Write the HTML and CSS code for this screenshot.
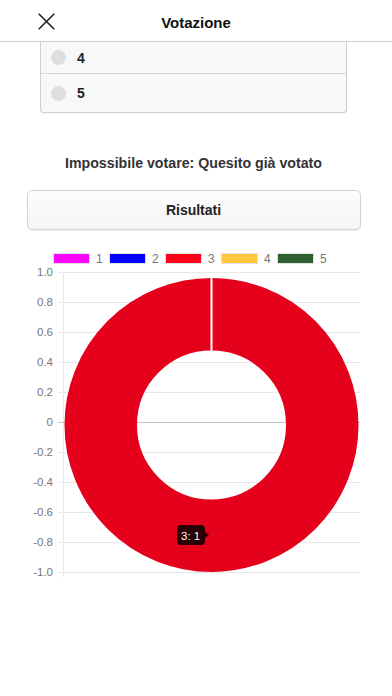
FILE: index.html
```html
<!DOCTYPE html>
<html>
	<head>
		<title>Votazione</title>
		<meta http-equiv="Content-Type" content="text/html; charset=UTF-8">
		<meta name="viewport" content="width=device-width, initial-scale=1">
		<link rel="stylesheet" href="styles.css">
	</head>

	<body>
		<div class="topbar">
			<button class="close" title="Chiudi">
				<svg width="17" height="17" viewBox="0 0 17 17">
					<path d="M1.2 1.2 L15.8 15.8 M15.8 1.2 L1.2 15.8" stroke="#222" stroke-width="1.6" fill="none" stroke-linecap="round"/>
				</svg>
			</button>
			<h1 class="title">Votazione</h1>
		</div>

		<div class="container">
			<!-- answer list, scrolled under the top bar -->
			<ul class="answers">
				<li class="answer first"><span class="radio"></span><span class="label">4</span></li>
				<li class="answer"><span class="radio"></span><span class="label">5</span></li>
			</ul>

			<p class="message">Impossibile votare: Quesito già votato</p>

			<button class="results">Risultati</button>

			<!-- chart -->
			<svg class="chart" width="392" height="340" viewBox="0 245 392 340">
				<!-- legend -->
				<g class="legend">
					<rect x="53.5" y="252.5" width="36" height="10" fill="#ff00ff" stroke="#e2e2e2"/>
					<text x="96" y="262">1</text>
					<rect x="109.5" y="252.5" width="36" height="10" fill="#0000ff" stroke="#e2e2e2"/>
					<text x="152" y="262">2</text>
					<rect x="165.5" y="252.5" width="36" height="10" fill="#ff0019" stroke="#e2e2e2"/>
					<text x="208" y="262">3</text>
					<rect x="221.5" y="252.5" width="36" height="10" fill="#ffc83c" stroke="#e2e2e2"/>
					<text x="264" y="262">4</text>
					<rect x="277.5" y="252.5" width="36" height="10" fill="#2f6032" stroke="#e2e2e2"/>
					<text x="320" y="262">5</text>
				</g>

				<!-- grid -->
				<g stroke="#e8e8e8" stroke-width="1">
					<line x1="58" y1="271.5" x2="360" y2="271.5"/>
					<line x1="58" y1="301.5" x2="360" y2="301.5"/>
					<line x1="58" y1="331.5" x2="360" y2="331.5"/>
					<line x1="58" y1="361.5" x2="360" y2="361.5"/>
					<line x1="58" y1="391.5" x2="360" y2="391.5"/>
					<line x1="58" y1="451.5" x2="360" y2="451.5"/>
					<line x1="58" y1="481.5" x2="360" y2="481.5"/>
					<line x1="58" y1="511.5" x2="360" y2="511.5"/>
					<line x1="58" y1="541.5" x2="360" y2="541.5"/>
					<line x1="58" y1="571.5" x2="360" y2="571.5"/>
					<line x1="63.5" y1="271" x2="63.5" y2="576"/>
				</g>
				<line x1="58" y1="421.5" x2="360" y2="421.5" stroke="#c4c4c4" stroke-width="1"/>

				<!-- y axis -->
				<g class="ticks">
					<text x="53" y="275">1.0</text>
					<text x="53" y="305">0.8</text>
					<text x="53" y="335">0.6</text>
					<text x="53" y="365">0.4</text>
					<text x="53" y="395">0.2</text>
					<text x="53" y="425">0</text>
					<text x="53" y="455">-0.2</text>
					<text x="53" y="485">-0.4</text>
					<text x="53" y="515">-0.6</text>
					<text x="53" y="545">-0.8</text>
					<text x="53" y="575">-1.0</text>
				</g>

				<!-- donut -->
				<circle cx="211.5" cy="424" r="110.75" fill="none" stroke="#e5001b" stroke-width="72.5"/>
				<line x1="211.5" y1="276" x2="211.5" y2="351" stroke="#fff" stroke-width="2"/>

				<!-- tooltip -->
				<path d="M181 524 h20 a4 4 0 0 1 4 4 v3 l4 3 l-4 3 v3 a4 4 0 0 1 -4 4 h-20 a4 4 0 0 1 -4 -4 v-12 a4 4 0 0 1 4 -4 z" fill="#1a0000" fill-opacity="0.92"/>
				<text class="tip" x="181" y="538.5">3: 1</text>
			</svg>
		</div>
	</body>
</html>
```

FILE: styles.css
```css
body {
	margin: 0;
	font-family: "Liberation Sans", Arial, sans-serif;
	color: #222;
	background-color: #fff;
}

.topbar {
	position: relative;
	box-sizing: border-box;
	height: 42px;
	padding-top: 3px;
	border-bottom: 1px solid #cfcfcf;
	background-color: #fff;
	display: flex;
	align-items: center;
	justify-content: center;
}

.close {
	position: absolute;
	left: 38px;
	top: 13px;
	border: none;
	background: none;
	padding: 0;
	width: 17px;
	height: 17px;
	cursor: pointer;
}

.close svg {
	display: block;
}

.title {
	margin: 0;
	font-size: 15px;
	font-weight: bold;
	color: #111;
}

.container {
	display: flex;
	flex-direction: column;
	align-items: center;
	padding-right: 5px;
}

.answers {
	list-style: none;
	margin: 0;
	padding: 0;
	width: 305px;
	border: 1px solid #cfcfcf;
	border-top: none;
	border-radius: 0 0 4px 4px;
	background-color: #f8f8f8;
	box-shadow: 0 1px 1px rgba(0, 0, 0, 0.04);
}

.answer {
	display: flex;
	align-items: center;
	height: 38px;
	padding-left: 10px;
	border-top: 1px solid #d6d6d6;
}

.answer.first {
	height: 31px;
	border-top: none;
}

.radio {
	width: 15px;
	height: 15px;
	border-radius: 50%;
	background-color: #dedede;
	margin-right: 11px;
}

.label {
	font-size: 14px;
	font-weight: bold;
	color: #222;
}

.message {
	margin: 41px 0 0 0;
	height: 18px;
	line-height: 18px;
	font-size: 14.2px;
	font-weight: bold;
	color: #333;
}

.results {
	margin-top: 18px;
	width: 334px;
	height: 40px;
	border: 1px solid #d4d4d4;
	border-radius: 5px;
	background: linear-gradient(#fdfdfd, #f4f4f4);
	box-shadow: 0 1px 1px rgba(0, 0, 0, 0.08);
	font-family: "Liberation Sans", Arial, sans-serif;
	font-size: 14px;
	font-weight: bold;
	color: #222;
	cursor: pointer;
}

.chart {
	display: block;
	margin-top: 16px;
	margin-right: -5px;
	font-family: "Liberation Sans", Arial, sans-serif;
}

.legend text {
	font-size: 12px;
	fill: #777;
}

.ticks text {
	font-size: 11.5px;
	fill: #777;
	text-anchor: end;
}

.tip {
	font-size: 11.5px;
	fill: #fff;
}
```
